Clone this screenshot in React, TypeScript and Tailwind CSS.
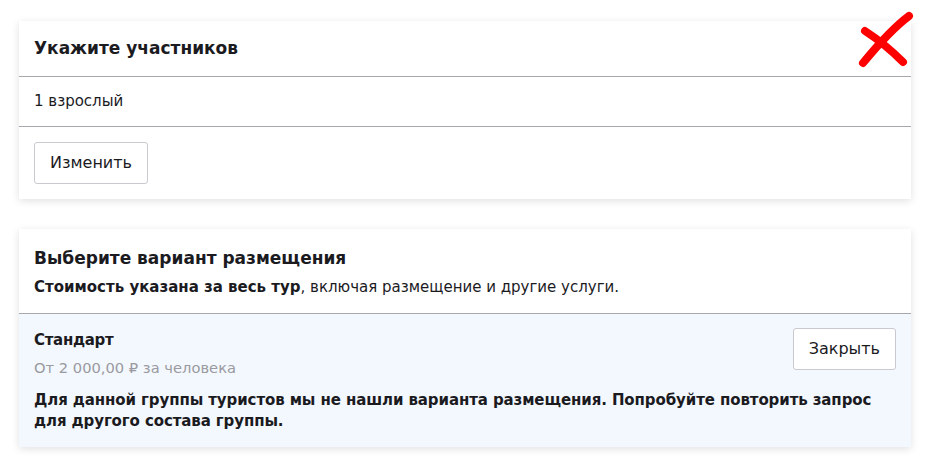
import React from "react";

export default function App() {
  return (
    <div className="relative min-h-[466px] w-[930px] bg-white px-[19px] pt-[21px] text-[#1b1b1f]" style={{ fontFamily: "'DejaVu Sans', sans-serif" }}>
      <div className="bg-white shadow-[0_2px_8px_rgba(0,0,0,0.12)]">
        <div className="flex h-[56px] items-center border-b border-[#a7a7ae] px-[15px]">
          <h2 className="text-[17px] font-bold">Укажите участников</h2>
        </div>
        <div className="flex h-[50px] items-center border-b border-[#a7a7ae] px-[15px] text-[15px]">1 взрослый</div>
        <div className="px-[15px] py-[15px]">
          <button className="h-[42px] rounded-[3px] border border-[#c9c9cf] bg-white px-[15px] text-[16px]">Изменить</button>
        </div>
      </div>

      <div className="mt-[30px] bg-white shadow-[0_2px_8px_rgba(0,0,0,0.12)]">
        <div className="border-b border-[#a7a7ae] px-[15px] pb-[15px] pt-[16px]">
          <h2 className="text-[17px] font-bold leading-[26px]">Выберите вариант размещения</h2>
          <p className="mt-[5px] text-[15px] leading-[22px]">
            <span className="font-bold">Стоимость указана за весь тур</span>, включая размещение и другие услуги.
          </p>
        </div>
        <div className="bg-[#f3f8fe] px-[15px] pb-[15px] pt-[14px]">
          <div className="flex items-start justify-between">
            <div>
              <div className="text-[15px] font-bold leading-[24px] tracking-[-0.3px]">Стандарт</div>
              <div className="mt-[5px] text-[14.7px] leading-[22px] text-[#9a9aa0]">От 2 000,00 ₽ за человека</div>
            </div>
            <button className="h-[42px] rounded-[3px] border border-[#c9c9cf] bg-white px-[15px] text-[16px]">Закрыть</button>
          </div>
          <p className="mt-[11px] text-[15px] font-bold leading-[21px] tracking-[-0.1px]">
            Для данной группы туристов мы не нашли варианта размещения. Попробуйте повторить запрос для другого состава группы.
          </p>
        </div>
      </div>

      <svg className="absolute left-[855px] top-[8px]" width="64" height="64" viewBox="0 0 64 64" fill="none">
        <path d="M8 55 C 22 38, 38 20, 54 8" stroke="#ff0000" strokeWidth="8" strokeLinecap="round" />
        <path d="M10 23 C 24 32, 38 44, 48 54" stroke="#ff0000" strokeWidth="8" strokeLinecap="round" />
      </svg>
    </div>
  );
}
